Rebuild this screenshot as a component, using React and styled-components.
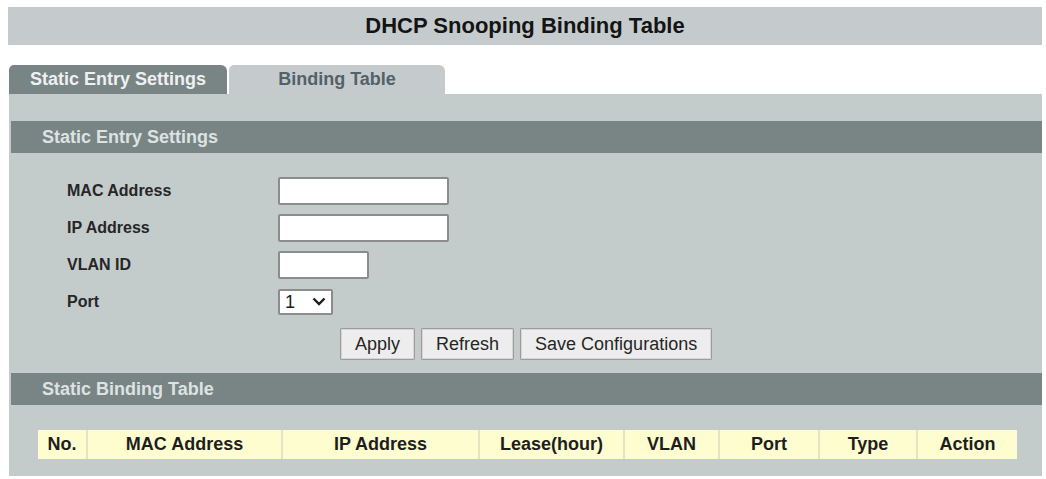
import React from 'react';
import styled, { createGlobalStyle } from 'styled-components';

const GlobalStyle = createGlobalStyle`
    body {
        margin: 0;
        background: #ffffff;
        font-family: "Liberation Sans", Arial, sans-serif;
        color: #1c1c1c;
    }
`;

const Page = styled.div`
    width: 1034px;
    padding: 7px 0 0 8px;
`;

const TitleBar = styled.div`
    height: 38px;
    background: #c5cbcc;
    display: flex;
    align-items: center;
    justify-content: center;
    font-size: 22px;
    font-weight: bold;
    color: #141414;
`;

const TabRow = styled.div`
    display: flex;
    gap: 2px;
    margin-top: 20px;
    padding-left: 1px;
`;

const Tab = styled.div`
    width: ${p => p.$width}px;
    height: 29px;
    display: flex;
    align-items: center;
    justify-content: center;
    border-radius: 5px 6px 0 0;
    font-size: 18px;
    font-weight: bold;
    background: ${p => (p.$active ? '#798585' : '#c5cbcc')};
    color: ${p => (p.$active ? '#eef1f1' : '#51626a')};
`;

const Panel = styled.div`
    margin-left: 1px;
    background: #c4cbcb;
    padding: 27px 0 17px;
`;

const SectionHeader = styled.div`
    margin-left: 2px;
    height: 32px;
    display: flex;
    align-items: center;
    padding-left: 31px;
    background: #798585;
    color: #dde2e2;
    font-size: 18px;
    font-weight: bold;
    margin-top: ${p => p.$gap || 0}px;
`;

const Form = styled.div`
    display: grid;
    grid-template-columns: 211px 1fr;
    grid-auto-rows: 28px;
    row-gap: 9px;
    align-items: center;
    padding: 24px 0 0 58px;
`;

const Label = styled.div`
    font-size: 16px;
    font-weight: bold;
    color: #262626;
`;

const TextInput = styled.input`
    box-sizing: border-box;
    width: ${p => p.$width}px;
    height: 28px;
    border: 2px solid #8c8c8c;
    border-radius: 2px;
    background: #ffffff;
    padding: 0 4px;
    font: 16px "Liberation Sans", Arial, sans-serif;
`;

const SelectWrap = styled.div`
    position: relative;
    width: 55px;
    height: 26px;
`;

const Select = styled.select`
    appearance: none;
    box-sizing: border-box;
    width: 55px;
    height: 26px;
    border: 2px solid #8c8c8c;
    border-radius: 2px;
    background: #ffffff;
    padding: 0 0 0 5px;
    font: 18px "Liberation Sans", Arial, sans-serif;
    color: #1c1c1c;
`;

const Chevron = styled.svg`
    position: absolute;
    right: 7px;
    top: 8px;
    pointer-events: none;
`;

const ButtonRow = styled.div`
    display: flex;
    gap: 6px;
    margin-top: 12px;
    padding-left: 331px;
`;

const Button = styled.button`
    height: 32px;
    padding: 0 14px;
    border: 1px solid #9c9c9c;
    box-shadow: inset 0 0 0 1px #d6d6d6;
    border-radius: 1px;
    background: #ededed;
    font: 18px "Liberation Sans", Arial, sans-serif;
    color: #262626;
`;

const Table = styled.table`
    margin: 25px 0 0 29px;
    width: 979px;
    border-collapse: collapse;
    table-layout: fixed;
    background: #fdfdd0;
`;

const HeadCell = styled.th`
    width: ${p => p.$width - 2}px;
    height: 29px;
    padding: 0;
    font-size: 18px;
    font-weight: bold;
    color: #1e1e1e;
    text-align: center;
    border-right: 2px solid #e4e4c4;
    &:last-child {
        width: ${p => p.$width}px;
        border-right: none;
    }
`;

const columns = [
    ['No.', 50],
    ['MAC Address', 195],
    ['IP Address', 197],
    ['Lease(hour)', 145],
    ['VLAN', 95],
    ['Port', 100],
    ['Type', 98],
    ['Action', 99],
];

export default function App() {
    return (
        <>
            <GlobalStyle />
            <Page>
                <TitleBar>DHCP Snooping Binding Table</TitleBar>
                <TabRow>
                    <Tab $active $width={218}>Static Entry Settings</Tab>
                    <Tab $width={216}>Binding Table</Tab>
                </TabRow>
                <Panel>
                    <SectionHeader>Static Entry Settings</SectionHeader>
                    <Form>
                        <Label>MAC Address</Label>
                        <TextInput $width={171} />
                        <Label>IP Address</Label>
                        <TextInput $width={171} />
                        <Label>VLAN ID</Label>
                        <TextInput $width={91} />
                        <Label>Port</Label>
                        <SelectWrap>
                            <Select defaultValue="1">
                                <option value="1">1</option>
                                <option value="2">2</option>
                            </Select>
                            <Chevron width="14" height="9" viewBox="0 0 14 9">
                                <path d="M1.5 1.5 L7 7 L12.5 1.5" fill="none" stroke="#1c1c1c" strokeWidth="2.4" />
                            </Chevron>
                        </SelectWrap>
                    </Form>
                    <ButtonRow>
                        <Button>Apply</Button>
                        <Button>Refresh</Button>
                        <Button>Save Configurations</Button>
                    </ButtonRow>
                    <SectionHeader $gap={13}>Static Binding Table</SectionHeader>
                    <Table>
                        <thead>
                            <tr>
                                {columns.map(([name, width]) => (
                                    <HeadCell key={name} $width={width}>{name}</HeadCell>
                                ))}
                            </tr>
                        </thead>
                    </Table>
                </Panel>
            </Page>
        </>
    );
}
